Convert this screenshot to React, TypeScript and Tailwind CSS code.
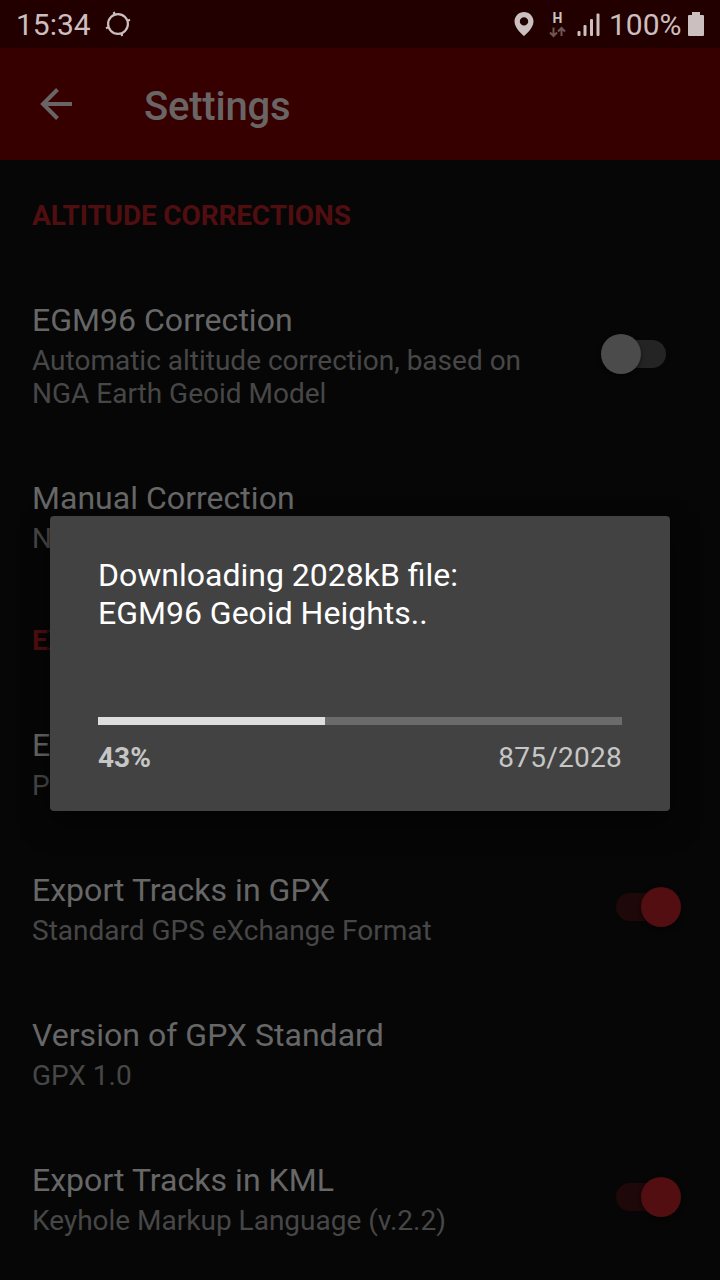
import React from "react";

function Toggle({ on }: { on: boolean }) {
  return on ? (
    <div className="mb-1 flex h-10 w-[65px] shrink-0 items-center">
      <div className="h-7 w-12 rounded-full bg-[#1e0809]" />
      <div className="-ml-[23px] size-10 shrink-0 rounded-full bg-[#520e10] shadow-[0_2px_4px_rgba(0,0,0,0.5)]" />
    </div>
  ) : (
    <div className="mr-[15px] mb-1 flex h-10 w-[65px] shrink-0 items-center">
      <div className="z-10 size-10 shrink-0 rounded-full bg-[#4b4b4b] shadow-[0_2px_4px_rgba(0,0,0,0.5)]" />
      <div className="-ml-[23px] h-7 w-12 rounded-full bg-[#242424]" />
    </div>
  );
}

function Category({ children }: { children: React.ReactNode }) {
  return (
    <h2 className="h-[102px] shrink-0 px-8 pt-[37px] text-[28px] leading-[33px] font-bold tracking-[-0.15px] text-[#500e10]">{children}</h2>
  );
}

function Preference({ title, lines, on }: { title: string; lines: string[]; on?: boolean }) {
  return (
    <div className="flex shrink-0 items-center justify-between pt-[37px] pr-[39px] pb-8 pl-8 whitespace-nowrap">
      <div>
        <div className="mb-[5px] text-[32px] leading-[38px] tracking-[0.03px] text-[#676767]">{title}</div>
        {lines.map((line) => (
          <div key={line} className="text-[28px] leading-[33px] text-[#474747]">{line}</div>
        ))}
      </div>
      {on !== undefined && <Toggle on={on} />}
    </div>
  );
}

function StatusBar() {
  return (
    <div className="flex h-12 shrink-0 items-center bg-[#220000] pl-4 text-[#cbbfbf]">
      <span className="w-[74px] pt-0.5 text-[30px] leading-[48px]">15:34</span>
      <svg className="ml-[15px] size-[26px]" viewBox="0 0 26 26" fill="none" stroke="currentColor" strokeWidth="2.2">
        <circle cx="13" cy="13" r="9.900" />
        <path d="M8.700 1l1.200 3M25 8.700l-3 1.200M17.300 25l-1.200-3M1 17.300l3-1.200" />
      </svg>
      <svg className="ml-[383px] h-6 w-5" viewBox="0 0 20 24" fill="currentColor">
        <path fillRule="evenodd" d="M10 0C4.700 0 .5 4.200 .5 9.500C.5 16.500 10 24 10 24S19.500 16.500 19.500 9.500C19.500 4.200 15.300 0 10 0ZM10 5.200A4.200 4.200 0 1 1 10 13.600A4.200 4.200 0 0 1 10 5.200Z" />
      </svg>
      <div className="ml-[15px] flex w-[18px] flex-col items-center">
        <span className="h-4 pr-px text-[14px] leading-[16px] font-bold">H</span>
        <svg className="h-[12px] w-[18px] text-[#6f5555]" viewBox="0 0 18 12" fill="none" stroke="currentColor" strokeWidth="2">
          <path d="M4.500 1.500v8.500M1 6.500l3.500 3.500 3.500-3.500M12.500 10V2M9 5.500L12.500 2l3.500 3.500" />
        </svg>
      </div>
      <svg className="ml-[10px] h-6 w-[23px]" viewBox="0 0 23 24" fill="currentColor">
        <rect x="0.500" y="19" width="3" height="5" rx="1" />
        <rect x="6.500" y="13" width="3" height="11" rx="1" />
        <rect x="13" y="7" width="3" height="17" rx="1" />
        <rect x="19.500" y="1.500" width="3" height="22.500" rx="1" />
      </svg>
      <span className="ml-[9px] w-[72px] pt-0.5 text-[30px] leading-[48px]">100%</span>
      <svg className="ml-[7px] h-6 w-4" viewBox="0 0 16 24" fill="currentColor">
        <path d="M4 0h8v3h3a1 1 0 0 1 1 1v19a1 1 0 0 1-1 1H1a1 1 0 0 1-1-1V4a1 1 0 0 1 1-1h3z" />
      </svg>
    </div>
  );
}

export default function App() {
  const received = 875;
  const total = 2028;
  return (
    <div className="relative flex h-[1280px] w-[720px] flex-col overflow-hidden bg-[#060606] font-['Roboto',sans-serif]">
      <StatusBar />
      <header className="flex h-28 shrink-0 items-center bg-[#370000] pl-10 text-[#6a6565]">
        <svg className="h-8 w-8" viewBox="0 0 32 32" fill="none" stroke="currentColor" strokeWidth="4">
          <path d="M32 16H3M17.500 1.500L3 16l14.500 14.500" />
        </svg>
        <h1 className="mt-1.5 ml-[72px] text-[40px] leading-[48px] font-medium tracking-[-0.2px]">Settings</h1>
      </header>
      <main className="flex flex-col pt-0.5">
        <Category>ALTITUDE CORRECTIONS</Category>
        <Preference title="EGM96 Correction" lines={["Automatic altitude correction, based on", "NGA Earth Geoid Model"]} on={false} />
        <Preference title="Manual Correction" lines={["No correction"]} />
        <Category>EXPORT</Category>
        <Preference title="Export Folder" lines={["Path"]} />
        <Preference title="Export Tracks in GPX" lines={["Standard GPS eXchange Format"]} on />
        <Preference title="Version of GPX Standard" lines={["GPX 1.0"]} />
        <Preference title="Export Tracks in KML" lines={["Keyhole Markup Language (v.2.2)"]} on />
      </main>
      <div role="dialog" className="absolute top-[516px] left-[50px] flex h-[295px] w-[620px] flex-col rounded bg-[#424242] px-12 pt-10 shadow-[0_12px_28px_rgba(0,0,0,0.5)]">
        <p className="text-[32px] leading-[38px] text-white">
          Downloading 2028kB file:
          <br />
          EGM96 Geoid Heights..
        </p>
        <div className="mt-[85px] h-2 w-[524px] bg-[#6b6b6b]">
          <div className="h-2 bg-[#dedede]" style={{ width: `${(received / total) * 100 + 0.2}%` }} />
        </div>
        <div className="mt-4 flex justify-between text-[28px] leading-[33px] text-[#c6c6c6]">
          <span className="font-bold">43%</span>
          <span className="tracking-[0.25px]">{received}/{total}</span>
        </div>
      </div>
    </div>
  );
}
